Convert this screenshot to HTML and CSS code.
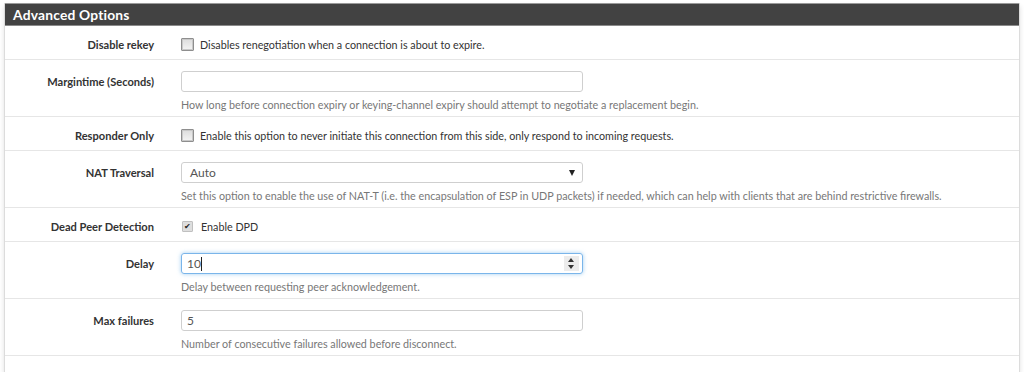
FILE: index.html
```html
<!DOCTYPE html>
<html lang="en">
<head>
    <meta charset="UTF-8">
    <title>Advanced Options</title>
    <link rel="stylesheet" href="styles.css">
</head>
<body>
    <div class="panel">
        <div class="panel-heading">Advanced Options</div>

        <div class="form-row check-row">
            <div class="form-label">Disable rekey</div>
            <div class="form-control">
                <label class="check"><span class="box"></span>Disables renegotiation when a connection is about to expire.</label>
            </div>
        </div>

        <div class="form-row input-row">
            <div class="form-label">Margintime (Seconds)</div>
            <div class="form-control">
                <div class="field"></div>
                <div class="help">How long before connection expiry or keying-channel expiry should attempt to negotiate a replacement begin.</div>
            </div>
        </div>

        <div class="form-row check-row">
            <div class="form-label">Responder Only</div>
            <div class="form-control">
                <label class="check"><span class="box"></span>Enable this option to never initiate this connection from this side, only respond to incoming requests.</label>
            </div>
        </div>

        <div class="form-row input-row">
            <div class="form-label">NAT Traversal</div>
            <div class="form-control">
                <div class="field select">Auto<span class="arrow"></span></div>
                <div class="help">Set this option to enable the use of NAT-T (i.e. the encapsulation of ESP in UDP packets) if needed, which can help with clients that are behind restrictive firewalls.</div>
            </div>
        </div>

        <div class="form-row check-row">
            <div class="form-label">Dead Peer Detection</div>
            <div class="form-control">
                <label class="check"><span class="box checked">&#10004;</span>Enable DPD</label>
            </div>
        </div>

        <div class="form-row input-row">
            <div class="form-label">Delay</div>
            <div class="form-control">
                <div class="field focused">10<span class="caret"></span>
                    <span class="spinner"><span class="up"></span><span class="down"></span></span>
                </div>
                <div class="help">Delay between requesting peer acknowledgement.</div>
            </div>
        </div>

        <div class="form-row input-row">
            <div class="form-label">Max failures</div>
            <div class="form-control">
                <div class="field">5</div>
                <div class="help">Number of consecutive failures allowed before disconnect.</div>
            </div>
        </div>

        <div class="panel-footer"></div>
    </div>
</body>
</html>
```

FILE: styles.css
```css
body {
    margin: 0;
    padding: 3px 4px 0 4px;
    background-color: #ffffff;
    font-family: Lato, "Open Sans", sans-serif;
    font-size: 10.75px;
    color: #333;
}
.panel {
    background: white;
    border-left: 1px solid #dcdcdc;
    border-right: 1px solid #dcdcdc;
    box-shadow: 0 3px 5px rgba(0,0,0,0.12);
}
.panel-heading {
    height: 21px;
    line-height: 21px;
    background-color: #424242;
    border-top: 1px solid #9a9a9a;
    border-bottom: 1px solid #8a8a8a;
    color: white;
    font-weight: bold;
    font-size: 13.8px;
    padding-left: 8px;
    letter-spacing: 0.2px;
}
.form-row {
    display: flex;
    border-bottom: 1px solid #e6e6e6;
}
.check-row {
    padding: 8px 0 4px;
}
.input-row {
    padding: 11px 0 4px;
}
.form-label {
    width: 149px;
    text-align: right;
    font-weight: bold;
    font-size: 11.1px;
    line-height: 21px;
    color: #333;
}
.form-control {
    padding-left: 27px;
}
.check {
    display: flex;
    align-items: center;
    height: 21px;
}
.box {
    width: 11px;
    height: 11px;
    margin-right: 6px;
    border: 1px solid #8e8e8e;
    border-radius: 1px;
    background: linear-gradient(#dcdcdc, #f4f4f4);
    box-shadow: inset 0 0 0 1px #c8c8c8;
}
.box.checked {
    width: 9px;
    height: 9px;
    margin-left: 1px;
    margin-right: 8px;
    border-color: #c0c0c0;
    background: #dedede;
    box-shadow: none;
    font-size: 8px;
    line-height: 9px;
    text-align: center;
    color: #222;
}
.field {
    position: relative;
    box-sizing: border-box;
    width: 402px;
    height: 21px;
    line-height: 19px;
    padding: 0 5px;
    border: 1px solid #cfcfcf;
    border-radius: 3px;
    font-size: 12px;
    color: #555;
}
.field.select {
    padding-left: 8px;
}
.field.focused {
    border-color: #7ab5ea;
    box-shadow: 0 0 4px rgba(102,175,233,0.6);
}
.arrow {
    position: absolute;
    right: 7px;
    top: 7px;
    border-left: 3.5px solid transparent;
    border-right: 3.5px solid transparent;
    border-top: 6px solid #222;
}
.caret {
    display: inline-block;
    width: 1px;
    height: 14px;
    background: #222;
    vertical-align: -3px;
}
.spinner {
    position: absolute;
    right: 3px;
    top: 2px;
    width: 15px;
    height: 15px;
    background: #ececec;
}
.up, .down {
    position: absolute;
    left: 4px;
    border-left: 3.5px solid transparent;
    border-right: 3.5px solid transparent;
}
.up {
    top: 2px;
    border-bottom: 4px solid #333;
}
.down {
    bottom: 2px;
    border-top: 4px solid #333;
}
.help {
    margin-top: 6px;
    line-height: 14px;
    color: #777;
}
.panel-footer {
    height: 16px;
}
```
